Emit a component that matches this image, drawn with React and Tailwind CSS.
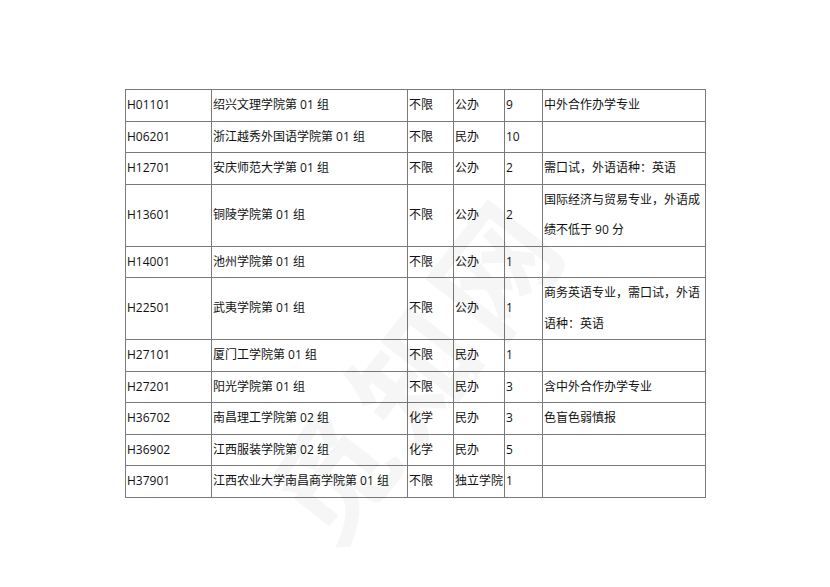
const rows = [
    ["H01101", "绍兴文理学院第 01 组", "不限", "公办", "9", "中外合作办学专业"],
    ["H06201", "浙江越秀外国语学院第 01 组", "不限", "民办", "10", ""],
    ["H12701", "安庆师范大学第 01 组", "不限", "公办", "2", "需口试，外语语种：英语"],
    ["H13601", "铜陵学院第 01 组", "不限", "公办", "2", "国际经济与贸易专业，外语成绩不低于 90 分"],
    ["H14001", "池州学院第 01 组", "不限", "公办", "1", ""],
    ["H22501", "武夷学院第 01 组", "不限", "公办", "1", "商务英语专业，需口试，外语语种：英语"],
    ["H27101", "厦门工学院第 01 组", "不限", "民办", "1", ""],
    ["H27201", "阳光学院第 01 组", "不限", "民办", "3", "含中外合作办学专业"],
    ["H36702", "南昌理工学院第 02 组", "化学", "民办", "3", "色盲色弱慎报"],
    ["H36902", "江西服装学院第 02 组", "化学", "民办", "5", ""],
    ["H37901", "江西农业大学南昌商学院第 01 组", "不限", "独立学院", "1", ""],
];

const widths = ["w-[86px]", "w-[196px]", "w-[46px]", "w-[51px]", "w-[38px]", "w-[163px]"];

export default function App() {
    return (
        <div className="relative w-[830px] h-[587px] bg-white overflow-hidden font-['Open_Sans','Noto_Sans_CJK_SC',sans-serif] text-[12px] text-[#111]">
            <div className="pt-[89px] pl-[125px]">
                <table className="border-collapse table-fixed w-[581px]">
                    <colgroup>
                        {widths.map((w, i) => (
                            <col key={i} className={w} />
                        ))}
                    </colgroup>
                    <tbody>
                        {rows.map((r, i) => (
                            <tr key={i}>
                                {r.map((c, j) => (
                                    <td
                                        key={j}
                                        className="border border-[#7a7a7a] h-[30.5px] pl-[1px] pr-0 py-0 leading-[30.5px] align-middle whitespace-normal"
                                    >
                                        {c}
                                    </td>
                                ))}
                            </tr>
                        ))}
                    </tbody>
                </table>
            </div>
            {/* 水印 */}
            <div className="absolute left-[215px] top-[305px] rotate-[-52deg] text-[120px] leading-none font-bold text-black/[0.035] tracking-[12px] pointer-events-none select-none font-['Noto_Sans_CJK_SC',sans-serif]">
                觅知网
            </div>
        </div>
    );
}
